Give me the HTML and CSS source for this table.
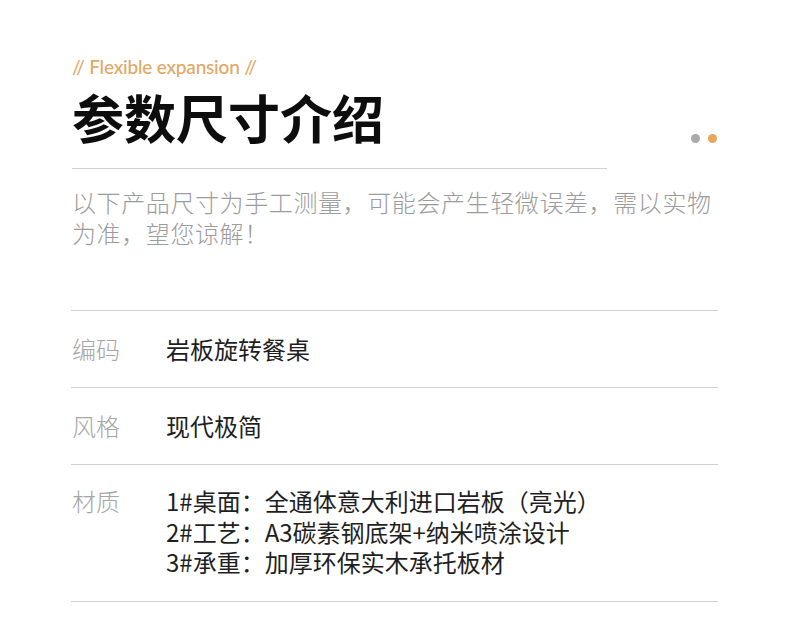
FILE: index.html
```html
<!DOCTYPE html>
<html lang="zh-CN">
<head>
<meta charset="utf-8">
<title>参数尺寸介绍</title>
<link rel="stylesheet" href="styles.css">
</head>
<body>
<main class="page">
  <header class="head">
    <p class="eyebrow">// Flexible expansion //</p>
    <div class="title-row">
      <h1 class="title">参数尺寸介绍</h1>
      <div class="dots"><span class="dot dot-gray"></span><span class="dot dot-orange"></span></div>
    </div>
    <div class="title-rule"></div>
    <p class="note">以下产品尺寸为手工测量，可能会产生轻微误差，需以实物为准，望您谅解！</p>
  </header>
  <section class="specs">
    <div class="row">
      <div class="label">编码</div>
      <div class="value">岩板旋转餐桌</div>
    </div>
    <div class="row">
      <div class="label">风格</div>
      <div class="value">现代极简</div>
    </div>
    <div class="row row-multi">
      <div class="label">材质</div>
      <div class="value">
        <div class="line">1#桌面：全通体意大利进口岩板（亮光）</div>
        <div class="line">2#工艺：A3碳素钢底架+纳米喷涂设计</div>
        <div class="line">3#承重：加厚环保实木承托板材</div>
      </div>
    </div>
  </section>
</main>
</body>
</html>
```
FILE: styles.css
```css
html, body {
  margin: 0;
  padding: 0;
  background: #ffffff;
}
body {
  font-family: "Noto Sans CJK SC", "Noto Sans", sans-serif;
  color: #1a1a1a;
}
.page {
  width: 646px;
  padding: 0 72px;
}
.head {
  padding-top: 54px;
}
.eyebrow {
  margin: 0;
  font-family: "Lato", "Noto Sans", sans-serif;
  font-size: 19px;
  line-height: 26px;
  letter-spacing: -0.2px;
  color: #e2a866;
  font-weight: 500;
}
.title-row {
  display: flex;
  justify-content: space-between;
  align-items: flex-end;
  margin-top: 6px;
}
.title {
  margin: 0;
  font-size: 52px;
  line-height: 62px;
  font-weight: 600;
  color: #0d0d0d;
  letter-spacing: 0;
}
.dots {
  display: flex;
  gap: 8px;
  padding-bottom: 5px;
  padding-right: 1px;
}
.dot {
  width: 9px;
  height: 9px;
  border-radius: 50%;
}
.dot-gray { background: #a9a9a9; }
.dot-orange { background: #e6a65b; }
.title-rule {
  width: 535px;
  height: 1px;
  background: #d0d0d0;
  margin-top: 20px;
}
.note {
  margin: 17px 0 0;
  font-size: 24px;
  line-height: 31px;
  letter-spacing: 0.6px;
  font-weight: 300;
  color: #9c9c9c;
}
.specs {
  margin-top: 62px;
  margin-left: -1px;
  border-top: 1px solid #d0d0d0;
}
.row {
  display: flex;
  align-items: center;
  height: 76px;
  border-bottom: 1px solid #d0d0d0;
  font-size: 24px;
  line-height: 30px;
}
.row-multi {
  height: 137px;
  align-items: flex-start;
  padding-top: 21px;
  box-sizing: border-box;
}
.label {
  width: 94px;
  padding-left: 1px;
  color: #a6a6a6;
  font-weight: 300;
}
.value {
  color: #1f1f1f;
  font-weight: 400;
}
.line {
  height: 30.5px;
}
```
